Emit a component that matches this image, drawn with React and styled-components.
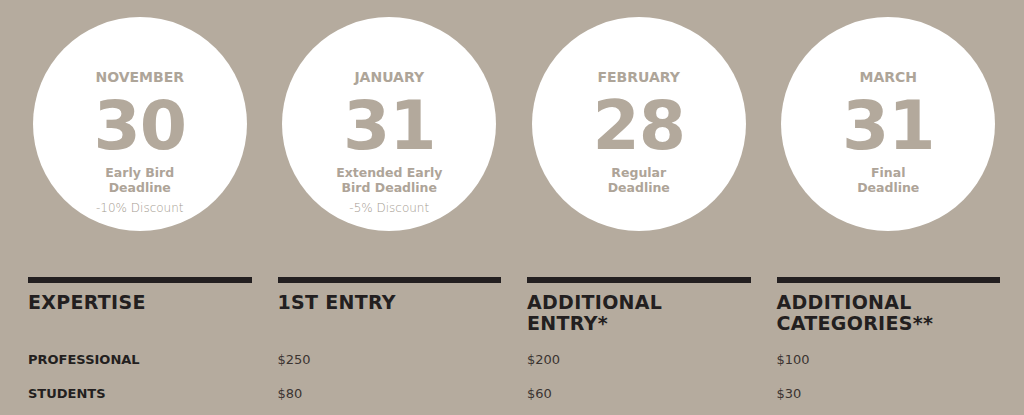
import React from "react";
import styled, { createGlobalStyle } from "styled-components";

const deadlines = [
  { month: "NOVEMBER", day: "30", label: ["Early Bird", "Deadline"], note: "-10% Discount" },
  { month: "JANUARY", day: "31", label: ["Extended Early", "Bird Deadline"], note: "-5% Discount" },
  { month: "FEBRUARY", day: "28", label: ["Regular", "Deadline"] },
  { month: "MARCH", day: "31", label: ["Final", "Deadline"] },
];

const headings = [["EXPERTISE"], ["1ST ENTRY"], ["ADDITIONAL", "ENTRY*"], ["ADDITIONAL", "CATEGORIES**"]];

const rows = [
  ["PROFESSIONAL", "$250", "$200", "$100"],
  ["STUDENTS", "$80", "$60", "$30"],
];

function App() {
  return (
    <>
      <GlobalStyle />
      <Page>
        <Grid>
          {deadlines.map((d) => (
            <CircleCell key={d.month}>
              <Circle>
                <Month>{d.month}</Month>
                <Day>{d.day}</Day>
                <Label>
                  {d.label[0]}
                  <br />
                  {d.label[1]}
                </Label>
                {d.note && <Note>{d.note}</Note>}
              </Circle>
            </CircleCell>
          ))}

          {headings.map((h) => (
            <Heading key={h.join("")}>
              {h.map((line, i) => (
                <div key={i}>{line}</div>
              ))}
            </Heading>
          ))}

          {rows.map((row) =>
            row.map((cell, i) =>
              i === 0 ? <RowLabel key={cell}>{cell}</RowLabel> : <Price key={row[0] + i}>{cell}</Price>
            )
          )}
        </Grid>
      </Page>
    </>
  );
}

const GlobalStyle = createGlobalStyle`
  html, body {
    margin: 0;
    background: #b5ab9e;
  }
  body {
    font-family: "DejaVu Sans", "Liberation Sans", sans-serif;
  }
`;

const Page = styled.div`
  padding: 17px 24px 0 28px;
  height: 415px;
  box-sizing: border-box;
  overflow: hidden;
`;

const Grid = styled.div`
  display: grid;
  grid-template-columns: repeat(4, 1fr);
  column-gap: 26px;
`;

const CircleCell = styled.div`
  display: flex;
  justify-content: center;
  margin-bottom: 46px;
`;

const Circle = styled.div`
  width: 214px;
  height: 214px;
  border-radius: 50%;
  background: #ffffff;
  display: flex;
  flex-direction: column;
  align-items: center;
  padding-top: 52px;
  box-sizing: border-box;
  text-align: center;
`;

const Month = styled.div`
  font-size: 14px;
  line-height: 17px;
  font-weight: 700;
  color: #aea599;
`;

const Day = styled.div`
  margin-top: 12px;
  font-size: 68px;
  line-height: 56px;
  font-weight: 700;
  color: #b3a99c;
  letter-spacing: -1px;
`;

const Label = styled.div`
  margin-top: 11px;
  font-size: 12.5px;
  line-height: 15px;
  font-weight: 700;
  color: #aea498;
`;

const Note = styled.div`
  margin-top: 6px;
  font-size: 12px;
  line-height: 15px;
  font-weight: 300;
  color: #a39a8f;
`;

const Heading = styled.div`
  border-top: 6px solid #231f20;
  padding-top: 9px;
  font-size: 19px;
  line-height: 21px;
  font-weight: 700;
  letter-spacing: 0.3px;
  color: #231f20;
  margin-bottom: 9px;
`;

const RowLabel = styled.div`
  font-size: 13px;
  line-height: 34px;
  font-weight: 700;
  color: #231f20;
`;

const Price = styled.div`
  font-size: 13px;
  line-height: 34px;
  color: #3b3431;
`;

export default App;
